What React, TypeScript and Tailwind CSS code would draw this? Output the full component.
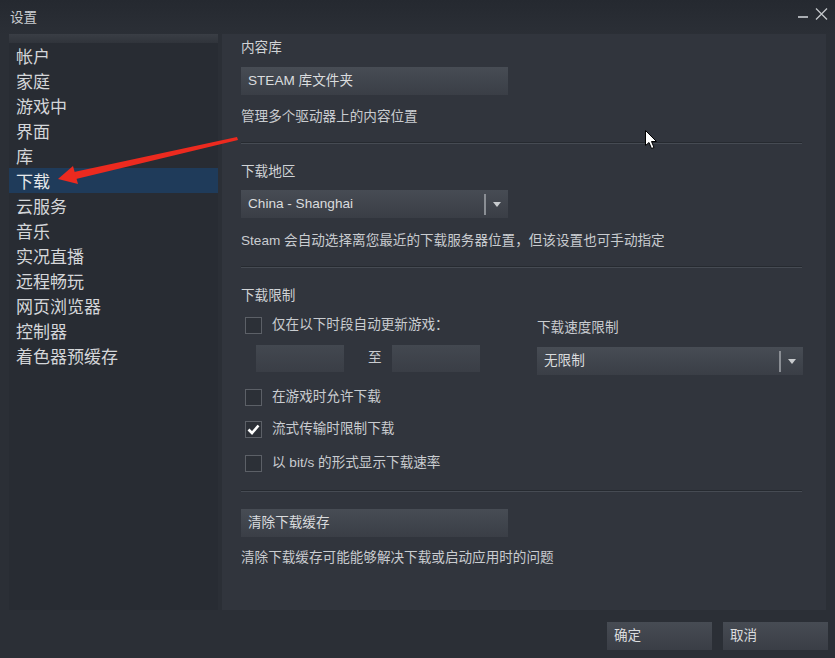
import { useState } from "react";

const FONT = { fontFamily: '"Liberation Sans", "Noto Sans CJK SC", sans-serif' };

const NAV = [
  "帐户",
  "家庭",
  "游戏中",
  "界面",
  "库",
  "下载",
  "云服务",
  "音乐",
  "实况直播",
  "远程畅玩",
  "网页浏览器",
  "控制器",
  "着色器预缓存",
];

function Button({ label, className = "" }: { label: string; className?: string }) {
  return (
    <div
      className={`flex h-[28px] items-center bg-gradient-to-b from-[#474c54] to-[#3a3e46] px-[7px] text-[13.6px] text-[#dadcde] ${className}`}
    >
      {label}
    </div>
  );
}

function Select({ value, className = "" }: { value: string; className?: string }) {
  return (
    <div
      className={`flex h-[28px] items-center bg-gradient-to-b from-[#474c54] to-[#3a3e46] pl-[7px] text-[13.6px] text-[#dadcde] ${className}`}
    >
      <span className="flex-1">{value}</span>
      <span className="h-[21px] w-[2px] bg-[#8a8e94]" />
      <span className="flex w-[22px] justify-center">
        <span className="h-0 w-0 border-x-[4px] border-t-[5px] border-x-transparent border-t-[#c8cbce]" />
      </span>
    </div>
  );
}

function Checkbox({ label, checked = false }: { label: string; checked?: boolean }) {
  const [on, setOn] = useState(checked);
  return (
    <div className="flex h-[18px] items-center" onClick={() => setOn(!on)}>
      <span className="ml-[4px] flex h-[17px] w-[17px] items-center justify-center border border-[#5c6067] bg-[#2c3037]">
        {on && (
          <svg width="13" height="11" viewBox="0 0 13 11">
            <path d="M1.5 5.5 L5 9 L11.5 1.5" fill="none" stroke="#ffffff" strokeWidth="2.6" />
          </svg>
        )}
      </span>
      <span className="ml-[10px] text-[13.6px] text-[#c9ccd0]">{label}</span>
    </div>
  );
}

function Divider({ className = "" }: { className?: string }) {
  return <div className={`h-[2px] w-[561px] border-t border-[#262a30] bg-[#464b53] ${className}`} />;
}

export default function App() {
  const [active, setActive] = useState(5);

  return (
    <div
      className="relative flex h-[658px] w-[835px] flex-col overflow-hidden bg-[#2b2f36] text-[#c9ccd0]"
      style={FONT}
    >
      {/* Title bar */}
      <header className="flex h-[34px] items-start justify-between bg-gradient-to-b from-[#252930] to-[#2b2f36] pl-[10px] pr-[7px]">
        <span className="mt-[8px] text-[13.6px] text-[#c9ccd0]">设置</span>
        <div className="mt-[8px] flex items-end gap-[7px]">
          <span className="mb-[2px] h-[2px] w-[10px] bg-[#a9adb2]" />
          <svg width="13" height="12" viewBox="0 0 13 12">
            <path d="M1 0.5 L12 11.5 M12 0.5 L1 11.5" stroke="#c3c6ca" strokeWidth="1.3" />
          </svg>
        </div>
      </header>

      <div className="flex h-[576px] gap-[4px] px-[9px]">
        {/* Sidebar */}
        <nav className="flex w-[209px] flex-col bg-[#282c33]">
          <div className="h-[9px] bg-gradient-to-b from-[#3a3e45] to-[#30343b]" />
          {NAV.map((item, i) => (
            <div
              key={item}
              onClick={() => setActive(i)}
              className={`flex h-[25px] items-center pl-[7px] pt-[4px] text-[17px] ${
                i === active ? "bg-[#1f3b5a] text-[#e6e8ea]" : "text-[#d4d6d9]"
              }`}
            >
              {item}
            </div>
          ))}
        </nav>

        {/* Downloads panel */}
        <main className="flex flex-1 flex-col bg-[#31353d] pl-[19px] pt-[5px] text-[13.6px]">
          <div className="h-[18px] leading-[18px] text-[#d0d3d6]">内容库</div>
          <Button label="STEAM 库文件夹" className="mt-[10px] w-[267px]" />
          <div className="mt-[13px] h-[18px] leading-[18px]">管理多个驱动器上的内容位置</div>
          <Divider className="mt-[16px]" />

          <div className="mt-[19px] h-[18px] leading-[18px] text-[#d0d3d6]">下载地区</div>
          <Select value="China - Shanghai" className="mt-[9px] w-[267px]" />
          <div className="mt-[14px] h-[18px] leading-[18px]">
            Steam 会自动选择离您最近的下载服务器位置，但该设置也可手动指定
          </div>
          <Divider className="mt-[16px]" />

          <div className="mt-[19px] h-[18px] leading-[18px] text-[#d0d3d6]">下载限制</div>

          <div className="mt-[11px] flex">
            <div className="w-[296px]">
              <Checkbox label="仅在以下时段自动更新游戏：" />
              <div className="mt-[11px] flex h-[27px] items-center pl-[15px]">
                <div className="h-[27px] w-[88px] bg-gradient-to-b from-[#434850] to-[#3a3e46]" />
                <span className="w-[48px] pl-[24px] text-[#c9ccd0]">至</span>
                <div className="h-[27px] w-[88px] bg-gradient-to-b from-[#434850] to-[#3a3e46]" />
              </div>
            </div>
            <div className="pt-[3px]">
              <div className="h-[18px] leading-[18px]">下载速度限制</div>
              <Select value="无限制" className="mt-[10px] h-[26px] w-[266px]" />
            </div>
          </div>

          <div className="mt-[13px]">
            <Checkbox label="在游戏时允许下载" />
          </div>
          <div className="mt-[14px]">
            <Checkbox label="流式传输时限制下载" checked />
          </div>
          <div className="mt-[16px]">
            <Checkbox label="以 bit/s 的形式显示下载速率" />
          </div>
          <Divider className="mt-[18px]" />

          <Button label="清除下载缓存" className="mt-[17px] h-[27px] w-[267px]" />
          <div className="mt-[12px] h-[18px] leading-[18px]">
            清除下载缓存可能能够解决下载或启动应用时的问题
          </div>
        </main>
      </div>

      {/* Footer */}
      <footer className="flex flex-1 items-start justify-end gap-[11px] pr-[7px] pt-[12px]">
        <Button label="确定" className="w-[105px]" />
        <Button label="取消" className="w-[105px]" />
      </footer>

      {/* Red pointer annotation */}
      <svg className="pointer-events-none absolute left-0 top-0" width="835" height="658">
        <polygon points="237,137 238,140 76,179 74,172" fill="#ec2a1f" />
        <polygon points="58,179 73,166 78,184" fill="#ec2a1f" />
      </svg>

      {/* Mouse cursor */}
      <svg className="pointer-events-none absolute left-[645px] top-[130px]" width="13" height="20" viewBox="0 0 13 20">
        <path d="M0.5 0.5 L0.5 15.5 L4 12.5 L6.5 18.5 L9 17.5 L6.5 11.5 L11.5 11.5 Z" fill="#ffffff" stroke="#000000" strokeWidth="1" />
      </svg>
    </div>
  );
}
